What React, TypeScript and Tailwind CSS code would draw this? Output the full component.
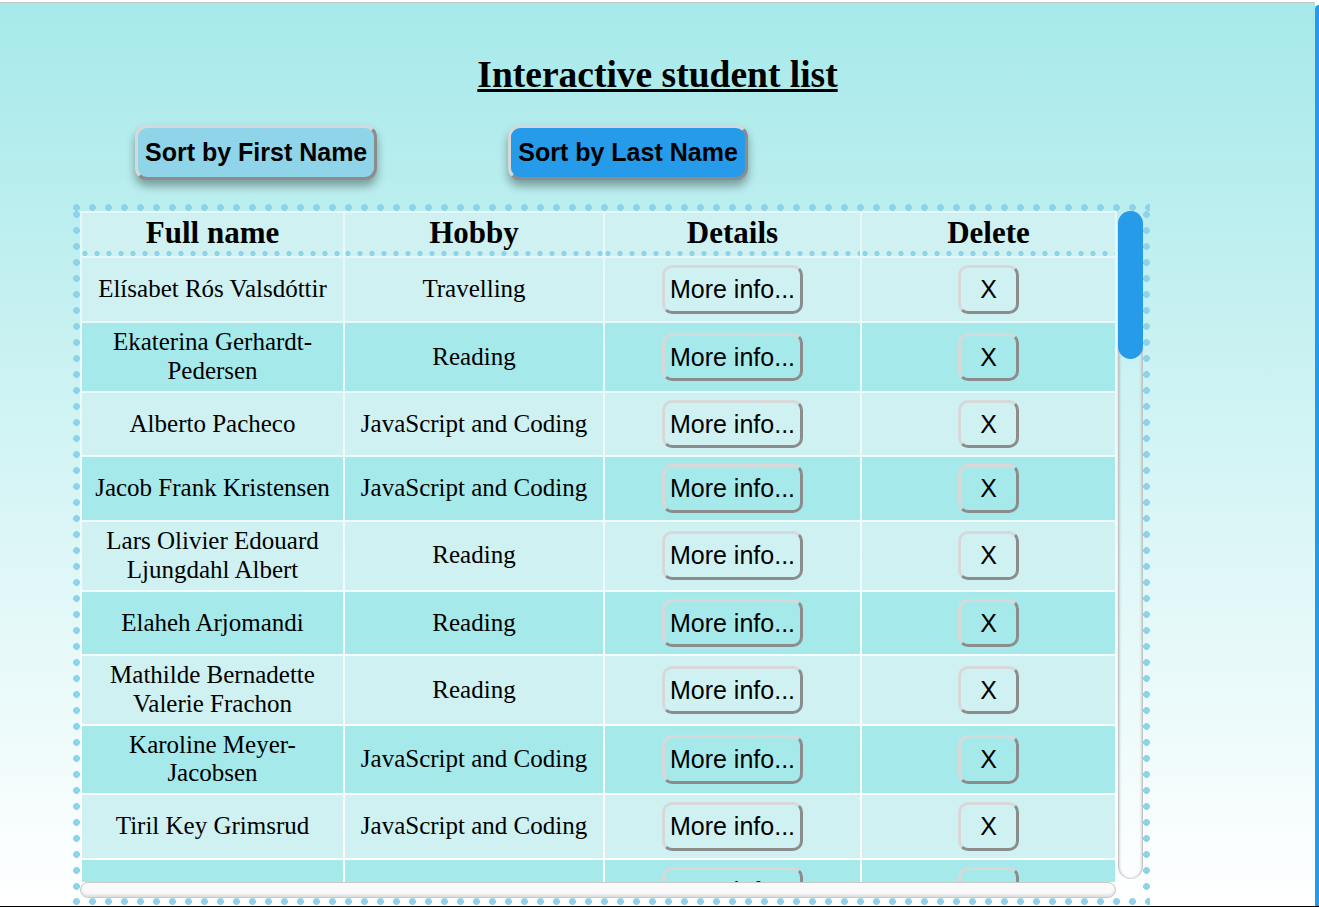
const students = [
  { name: "Elísabet Rós Valsdóttir", hobby: "Travelling" },
  { name: "Ekaterina Gerhardt-Pedersen", hobby: "Reading" },
  { name: "Alberto Pacheco", hobby: "JavaScript and Coding" },
  { name: "Jacob Frank Kristensen", hobby: "JavaScript and Coding" },
  { name: "Lars Olivier Edouard Ljungdahl Albert", hobby: "Reading" },
  { name: "Elaheh Arjomandi", hobby: "Reading" },
  { name: "Mathilde Bernadette Valerie Frachon", hobby: "Reading" },
  { name: "Karoline Meyer-Jacobsen", hobby: "JavaScript and Coding" },
  { name: "Tiril Key Grimsrud", hobby: "JavaScript and Coding" },
  { name: "Yan Li", hobby: "Reading" },
];

const btnBorder =
  "border-[3px] border-t-[#d8d8d8] border-l-[#d8d8d8] border-b-[#8c8c8c] border-r-[#8c8c8c]";

// big round dots for the box frame
const frameDots =
  "bg-[radial-gradient(circle_at_3.5px_3.5px,#8dd3e9_3.1px,transparent_3.7px)] bg-[length:16px_16px]";

export default function App() {
  return (
    <div className="h-[907px] overflow-hidden bg-white pt-[2px] flex flex-col border-b border-black">
      <div className="flex flex-1 min-h-0">
        {/* Page */}
        <div className="w-[1315px] border-t border-[#c3c3c3] bg-gradient-to-b from-[#a6e9ea] to-white overflow-hidden font-['Liberation_Serif',serif] text-black">
          <h1 className="pt-[50px] text-center text-[37.5px] font-bold underline leading-[1.149]">
            Interactive student list
          </h1>

          {/* Sort buttons */}
          <div className="mt-[29px] flex pl-[135px] gap-[131px] font-['Liberation_Sans',Arial,sans-serif]">
            <button
              className={`${btnBorder} rounded-[12px] bg-[#8fd4e8] px-[7px] py-[10px] text-[25px] font-bold leading-[1.15] shadow-[0_6px_10px_rgba(0,0,0,0.35)]`}
            >
              Sort by First Name
            </button>
            <button
              className={`${btnBorder} rounded-[12px] bg-[#259bea] px-[7px] py-[10px] text-[25px] font-bold leading-[1.15] shadow-[0_6px_10px_rgba(0,0,0,0.35)]`}
            >
              Sort by Last Name
            </button>
          </div>

          {/* Table box with dotted frame */}
          <div className="mt-[24px] ml-[73px] w-[1077px] h-[701px] flex flex-col">
            <div className={`h-[7px] ${frameDots}`} />
            <div className="flex flex-1 min-h-0">
              <div className={`w-[7px] ${frameDots}`} />
              <div className="flex-1 grid grid-cols-[1037px_25px] grid-rows-[671px_16px] gap-x-[1px]">
                <div className="overflow-hidden">
                  <table className="table-fixed w-[1037px] border-separate border-spacing-[2px] bg-white/60">
                    <colgroup>
                      <col className="w-[261px]" />
                      <col className="w-[258px]" />
                      <col className="w-[255px]" />
                      <col className="w-[253px]" />
                    </colgroup>
                    <thead>
                      <tr>
                        {["Full name", "Hobby", "Details", "Delete"].map((h) => (
                          <th
                            key={h}
                            className="pt-[2px] pb-[6px] text-[31px] font-bold leading-[1.149] bg-[#cff1f2] bg-[radial-gradient(circle_at_3px_2.5px,#8dd3e9_2.3px,transparent_2.9px)] bg-[length:12px_5px] bg-left-bottom bg-repeat-x"
                          >
                            {h}
                          </th>
                        ))}
                      </tr>
                    </thead>
                    <tbody className="text-[25px] leading-[1.149]">
                      {students.map((s, i) => (
                        <tr key={s.name} className={i % 2 === 0 ? "bg-[#cff1f2]" : "bg-[#a6e9ea]"}>
                          <td className="px-[8px] py-[5px] text-center align-middle">{s.name}</td>
                          <td className="px-[8px] py-[5px] text-center align-middle">{s.hobby}</td>
                          <td className="py-[5px] text-center align-middle">
                            <button
                              className={`${btnBorder} my-[2px] rounded-[10px] bg-transparent px-[5px] py-[7px] font-['Liberation_Sans',Arial,sans-serif] text-[25px] leading-[1.15]`}
                            >
                              More info...
                            </button>
                          </td>
                          <td className="py-[5px] text-center align-middle">
                            <button
                              className={`${btnBorder} my-[2px] w-[61px] rounded-[10px] bg-transparent py-[7px] font-['Liberation_Sans',Arial,sans-serif] text-[25px] leading-[1.15]`}
                            >
                              X
                            </button>
                          </td>
                        </tr>
                      ))}
                    </tbody>
                  </table>
                </div>

                {/* Vertical scrollbar */}
                <div className="h-[668px] rounded-full border-x border-[#c4c4c4] shadow-[inset_0_0_3px_rgba(0,0,0,0.3)] flex flex-col">
                  <div className="-mx-px h-[148px] rounded-full bg-[#259bea]" />
                </div>

                {/* Horizontal scrollbar */}
                <div className="w-[1036px] rounded-full border border-[#c9c9c9] bg-[#fafafa] shadow-[inset_0_-2px_3px_rgba(0,0,0,0.12)]" />
                <div />
              </div>
              <div className={`w-[7px] ${frameDots}`} />
            </div>
            <div className={`h-[7px] ${frameDots}`} />
          </div>
        </div>

        {/* Page scrollbar */}
        <div className="w-[4px] mt-[3px] rounded-tl-[4px] bg-[#259bea]" />
      </div>
    </div>
  );
}
